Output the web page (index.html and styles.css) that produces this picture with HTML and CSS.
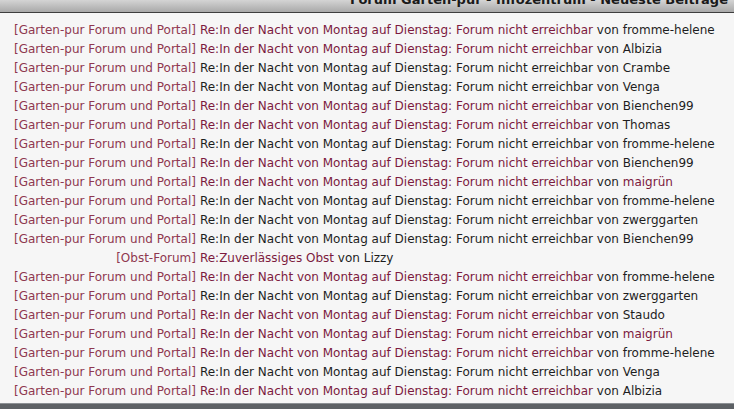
FILE: index.html
```html
<!DOCTYPE html>
<html lang="de">
<head>
    <meta charset="UTF-8">
    <title>Forum Garten-pur - Infozentrum - Neueste Beiträge</title>
    <link rel="stylesheet" href="styles.css">
</head>
<body>
    <div class="titlebar">
        <span class="title">Forum Garten-pur - Infozentrum - Neueste Beiträge</span>
    </div>

    <div class="posts">
        <span class="forum">[Garten-pur Forum und Portal]</span><span class="entry"><a class="topic new" href="#">Re:In der Nacht von Montag auf Dienstag: Forum nicht erreichbar</a> von fromme-helene</span>
        <span class="forum">[Garten-pur Forum und Portal]</span><span class="entry"><a class="topic new" href="#">Re:In der Nacht von Montag auf Dienstag: Forum nicht erreichbar</a> von Albizia</span>
        <span class="forum">[Garten-pur Forum und Portal]</span><span class="entry"><a class="topic" href="#">Re:In der Nacht von Montag auf Dienstag: Forum nicht erreichbar</a> von Crambe</span>
        <span class="forum">[Garten-pur Forum und Portal]</span><span class="entry"><a class="topic" href="#">Re:In der Nacht von Montag auf Dienstag: Forum nicht erreichbar</a> von Venga</span>
        <span class="forum">[Garten-pur Forum und Portal]</span><span class="entry"><a class="topic new" href="#">Re:In der Nacht von Montag auf Dienstag: Forum nicht erreichbar</a> von Bienchen99</span>
        <span class="forum">[Garten-pur Forum und Portal]</span><span class="entry"><a class="topic new" href="#">Re:In der Nacht von Montag auf Dienstag: Forum nicht erreichbar</a> von Thomas</span>
        <span class="forum">[Garten-pur Forum und Portal]</span><span class="entry"><a class="topic" href="#">Re:In der Nacht von Montag auf Dienstag: Forum nicht erreichbar</a> von fromme-helene</span>
        <span class="forum">[Garten-pur Forum und Portal]</span><span class="entry"><a class="topic new" href="#">Re:In der Nacht von Montag auf Dienstag: Forum nicht erreichbar</a> von Bienchen99</span>
        <span class="forum">[Garten-pur Forum und Portal]</span><span class="entry"><a class="topic new" href="#">Re:In der Nacht von Montag auf Dienstag: Forum nicht erreichbar</a> von <span class="user">maigrün</span></span>
        <span class="forum">[Garten-pur Forum und Portal]</span><span class="entry"><a class="topic" href="#">Re:In der Nacht von Montag auf Dienstag: Forum nicht erreichbar</a> von fromme-helene</span>
        <span class="forum">[Garten-pur Forum und Portal]</span><span class="entry"><a class="topic" href="#">Re:In der Nacht von Montag auf Dienstag: Forum nicht erreichbar</a> von zwerggarten</span>
        <span class="forum">[Garten-pur Forum und Portal]</span><span class="entry"><a class="topic" href="#">Re:In der Nacht von Montag auf Dienstag: Forum nicht erreichbar</a> von Bienchen99</span>
        <span class="forum">[Obst-Forum]</span><span class="entry"><a class="topic new" href="#">Re:Zuverlässiges Obst</a> von Lizzy</span>
        <span class="forum">[Garten-pur Forum und Portal]</span><span class="entry"><a class="topic new" href="#">Re:In der Nacht von Montag auf Dienstag: Forum nicht erreichbar</a> von fromme-helene</span>
        <span class="forum">[Garten-pur Forum und Portal]</span><span class="entry"><a class="topic" href="#">Re:In der Nacht von Montag auf Dienstag: Forum nicht erreichbar</a> von zwerggarten</span>
        <span class="forum">[Garten-pur Forum und Portal]</span><span class="entry"><a class="topic new" href="#">Re:In der Nacht von Montag auf Dienstag: Forum nicht erreichbar</a> von Staudo</span>
        <span class="forum">[Garten-pur Forum und Portal]</span><span class="entry"><a class="topic new" href="#">Re:In der Nacht von Montag auf Dienstag: Forum nicht erreichbar</a> von <span class="user">maigrün</span></span>
        <span class="forum">[Garten-pur Forum und Portal]</span><span class="entry"><a class="topic new" href="#">Re:In der Nacht von Montag auf Dienstag: Forum nicht erreichbar</a> von fromme-helene</span>
        <span class="forum">[Garten-pur Forum und Portal]</span><span class="entry"><a class="topic" href="#">Re:In der Nacht von Montag auf Dienstag: Forum nicht erreichbar</a> von Venga</span>
        <span class="forum">[Garten-pur Forum und Portal]</span><span class="entry"><a class="topic new" href="#">Re:In der Nacht von Montag auf Dienstag: Forum nicht erreichbar</a> von Albizia</span>
    </div>

    <div class="footbar"></div>
</body>
</html>
```

FILE: styles.css
```css
html, body {
    margin: 0;
    height: 409px;
    overflow: hidden;
}

body {
    font-family: "DejaVu Sans", Verdana, sans-serif;
    font-size: 12px;
    color: #1e1e1e;
    background-color: #f6f6f6;
    display: flex;
    flex-direction: column;
}

.titlebar {
    height: 12px;
    overflow: hidden;
    background: linear-gradient(#d4d4d4, #a9a9a9);
    border-bottom: 1px solid #3e3e3e;
    text-align: right;
    padding-right: 6px;
}

.title {
    display: block;
    margin-top: -9px;
    font-size: 13px;
    font-weight: bold;
    color: #1a1a1a;
    line-height: 18px;
}

.posts {
    flex: 1;
    display: grid;
    grid-template-columns: auto 1fr;
    column-gap: 4px;
    align-content: start;
    padding: 8px 0 0 14px;
    line-height: 19px;
}

.forum {
    text-align: right;
    color: #8f3850;
    white-space: nowrap;
}

.entry {
    white-space: nowrap;
}

.topic {
    color: #1e1e1e;
    text-decoration: none;
}

.topic.new,
.user {
    color: #7c1a3e;
}

.footbar {
    height: 5px;
    background-color: #5d6165;
    border-top: 1px solid #8c9094;
}
```
